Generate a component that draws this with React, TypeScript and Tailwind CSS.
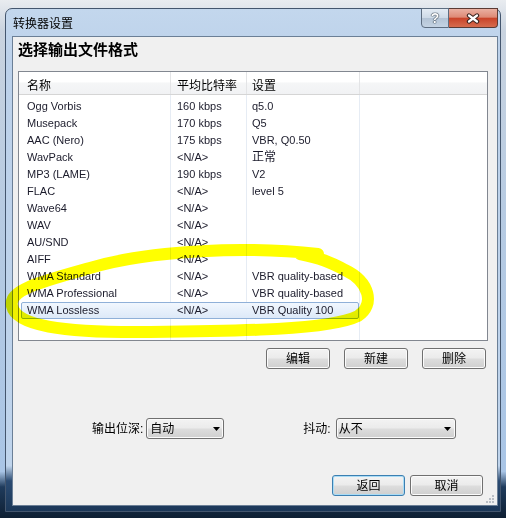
import { type FC, type ReactNode } from 'react'

const FORMATS: Array<[string, string, string]> = [
  ['Ogg Vorbis', '160 kbps', 'q5.0'],
  ['Musepack', '170 kbps', 'Q5'],
  ['AAC (Nero)', '175 kbps', 'VBR, Q0.50'],
  ['WavPack', '<N/A>', '正常'],
  ['MP3 (LAME)', '190 kbps', 'V2'],
  ['FLAC', '<N/A>', 'level 5'],
  ['Wave64', '<N/A>', ''],
  ['WAV', '<N/A>', ''],
  ['AU/SND', '<N/A>', ''],
  ['AIFF', '<N/A>', ''],
  ['WMA Standard', '<N/A>', 'VBR quality-based'],
  ['WMA Professional', '<N/A>', 'VBR quality-based'],
  ['WMA Lossless', '<N/A>', 'VBR Quality 100'],
]

const COLS = ['w-[152px] pl-[8px]', 'w-[76px] pl-[6px]', 'w-[113px] pl-[5px]', 'flex-1']

const isCjk = (s: string) => /[\u4e00-\u9fff]/.test(s)

// win7 style push button face
const FACE =
  'flex items-center h-[21px] rounded-[3px] border text-[12px] text-black bg-[linear-gradient(to_bottom,#f3f3f3_0%,#ebebeb_48%,#dddddd_52%,#cfcfcf_100%)]'

const Button: FC<{ children: ReactNode; className: string }> = ({ children, className }) => (
  <div className={`${FACE} justify-center ${className}`}>{children}</div>
)

const Select: FC<{ value: string; className: string }> = ({ value, className }) => (
  <div className={`${FACE} justify-between border-[#707070] shadow-[inset_0_0_0_1px_#fbfbfb] ${className}`}>
    <span>{value}</span>
    <svg width="7" height="4" viewBox="0 0 7 4">
      <path d="M0 0 H7 L3.5 4 Z" fill="#000" />
    </svg>
  </div>
)

const GridCells: FC<{ className: string }> = ({ className }) => (
  <div className={`flex ${className}`}>
    {COLS.map((c, i) => (
      <div key={i} className={`${c} ${i < 3 ? 'border-r border-[#e6ecf4]' : ''}`} />
    ))}
  </div>
)

const FormatList: FC = () => (
  <div className="shrink-0 ml-[5px] mt-[11px] w-[470px] h-[270px] border border-[#828790] bg-white flex flex-col text-[11px] text-[#1b1b2b]">
    <div className="shrink-0 flex h-[23px] border-b border-[#d5d5d5] bg-[linear-gradient(to_bottom,#ffffff_0%,#ffffff_45%,#f5f6f7_50%,#f1f2f4_100%)] text-[12px] text-black">
      {['名称', '平均比特率', '设置', ''].map((h, i) => (
        <div
          key={i}
          className={`${COLS[i]} flex items-center pt-[5px] ${i < 3 ? 'border-r border-[#e3e4e6]' : ''}`}
        >
          {h}
        </div>
      ))}
    </div>
    <GridCells className="shrink-0 h-[3px]" />
    {FORMATS.map((row, r) => {
      const selected = r === FORMATS.length - 1
      return (
        <div key={r} className="shrink-0 relative flex h-[17px]">
          {selected && (
            <div className="absolute left-[2px] top-0 w-[338px] h-[17px] rounded-[2px] border border-[#8fb0d8] bg-[linear-gradient(to_bottom,#f1f7fe_0%,#dde9f8_100%)]" />
          )}
          {[...row, ''].map((cell, i) => (
            <div
              key={i}
              className={`${COLS[i]} relative flex items-center whitespace-nowrap leading-[17px] ${
                i < 3 ? 'border-r border-[#e6ecf4]' : ''
              } ${selected && i < 2 ? 'border-transparent' : ''} ${isCjk(cell) ? 'text-[12px]' : ''}`}
            >
              {cell}
            </div>
          ))}
        </div>
      )
    })}
    <GridCells className="flex-1" />
  </div>
)

const App: FC = () => {
  return (
    <div className="relative w-[506px] h-[518px] overflow-hidden flex pt-[8px] pl-[5px] pr-[5px] pb-[6px] bg-[linear-gradient(to_bottom,#e9ecf0_0%,#c9d3df_6%,#b7cbe2_40%,#a9c5e6_91%,#1f3b5c_94%,#0e1f33_100%)] font-['Liberation_Sans','Noto_Sans_CJK_SC',sans-serif]">
      <div className="flex-1 flex flex-col rounded-t-[7px] border border-[#44566e] pl-[6px] pr-[2px] pb-[5px] bg-[linear-gradient(to_bottom,#c3d7ed_0%,#bcd1ea_10%,#bfd4ec_91%,#2b4b72_94%,#1b3758_100%)]">
        <div className="shrink-0 flex h-[27px] items-start">
          <div className="self-center pl-[1px] pt-[2px] text-[12px] text-black">转换器设置</div>
          <div className="ml-auto -mt-[1px] flex h-[20px]">
            <div className="w-[28px] h-[20px] rounded-bl-[4px] border border-[#5d6d80] bg-[linear-gradient(to_bottom,#e3ebf4_0%,#cdd9e6_50%,#b3c3d5_51%,#c4d3e3_100%)] flex items-center justify-center text-[14px] font-bold text-white [text-shadow:0_0_1px_#1d2b3a,0_0_1px_#1d2b3a,0_0_1px_#1d2b3a]">
              ?
            </div>
            <div className="w-[49px] h-[20px] rounded-br-[4px] border border-l-0 border-[#5a3a34] bg-[linear-gradient(to_bottom,#eab0a2_0%,#de8a76_45%,#c9442a_52%,#d66c4e_100%)] flex items-center justify-center">
              <svg width="14" height="11" viewBox="0 0 14 11">
                <path d="M3 2.5 L11 8.5 M11 2.5 L3 8.5" stroke="#3b2420" strokeWidth="4.4" strokeLinecap="round" />
                <path d="M3 2.5 L11 8.5 M11 2.5 L3 8.5" stroke="#ffffff" strokeWidth="2.2" strokeLinecap="round" />
              </svg>
            </div>
          </div>
        </div>

        <div className="flex-1 min-h-0 flex flex-col border border-[#6b7f96] bg-[#f0f0f0] text-black">
          <div className="shrink-0 ml-[5px] mt-[3px] text-[15px] leading-[20px] font-bold">选择输出文件格式</div>

          <FormatList />

          <div className="shrink-0 mt-[7px] pr-[11px] flex justify-end gap-[14px]">
            <Button className="w-[64px] border-[#707070] shadow-[inset_0_0_0_1px_#fbfbfb]">编辑</Button>
            <Button className="w-[64px] border-[#707070] shadow-[inset_0_0_0_1px_#fbfbfb]">新建</Button>
            <Button className="w-[64px] border-[#707070] shadow-[inset_0_0_0_1px_#fbfbfb]">删除</Button>
          </div>

          <div className="shrink-0 mt-[49px] flex items-center text-[12px]">
            <span className="ml-[79px]">输出位深:</span>
            <Select value="自动" className="ml-[3px] w-[78px] pl-[3px] pr-[3px]" />
            <span className="ml-[79px]">抖动:</span>
            <Select value="从不" className="ml-[5px] w-[120px] pl-[2px] pr-[4px]" />
          </div>

          <div className="shrink-0 mt-[36px] pr-[14px] flex justify-end gap-[5px]">
            <Button className="w-[73px] border-[#3c7fb1] shadow-[inset_0_0_0_1px_#a9dcf6]">返回</Button>
            <Button className="w-[73px] border-[#707070] shadow-[inset_0_0_0_1px_#fbfbfb]">取消</Button>
          </div>

          <div className="flex-1 min-h-0 flex justify-end items-end pr-[3px] pb-[2px]">
            <svg width="9" height="9" viewBox="0 0 9 9">
              {[
                [7, 1],
                [4, 4],
                [7, 4],
                [1, 7],
                [4, 7],
                [7, 7],
              ].map(([x, y], i) => (
                <rect key={i} x={x} y={y} width="2" height="2" fill="#b9bec5" />
              ))}
            </svg>
          </div>
        </div>
      </div>

      {/* highlighter annotation */}
      <svg
        className="absolute inset-0 pointer-events-none mix-blend-multiply"
        width="506"
        height="518"
        viewBox="0 0 506 518"
      >
        <path
          d="M318 254 C250 246 150 250 90 268 C40 282 8 290 12 306 C16 325 60 333 150 332 C240 331 330 330 358 316 C375 305 370 282 345 270 C330 262 320 258 300 254"
          fill="none"
          stroke="#ffff00"
          strokeWidth="12"
          strokeLinecap="round"
          strokeLinejoin="round"
        />
      </svg>
    </div>
  )
}

export default App
